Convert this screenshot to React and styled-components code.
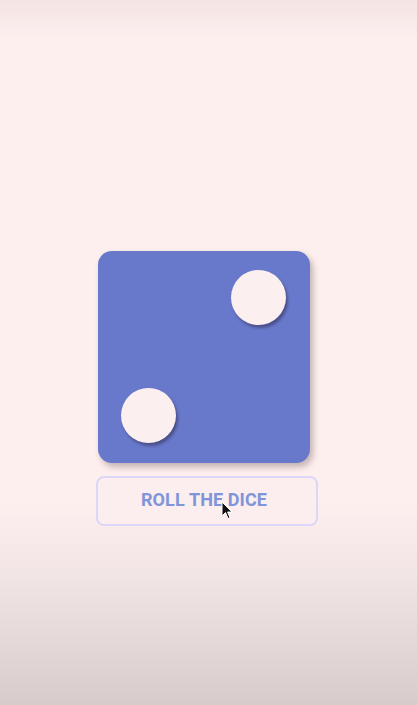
import styled, { createGlobalStyle } from 'styled-components';

const Global = createGlobalStyle`
  html, body { margin: 0; padding: 0; }
  body { font-family: Roboto, "Liberation Sans", sans-serif; }
`

const Page = styled.div`
  width: 417px;
  height: 705px;
  overflow: hidden;
  background: linear-gradient(to bottom, #f4e4e4 0px, #fcefee 40px, #fdefee 500px, #f1e4e4 580px, #d7cccc 705px);
  display: flex;
  flex-direction: column;
  align-items: center;
  padding-top: 251px;
  box-sizing: border-box;
  position: relative;
`

const Dice = styled.div`
  width: 212px;
  height: 212px;
  margin-left: -9px;
  border-radius: 14px;
  background: #6879cb;
  box-shadow: 3px 4px 6px rgba(90, 70, 70, 0.35);
  display: grid;
  grid-template-columns: 1fr 1fr;
  grid-template-rows: 1fr 1fr;
  padding: 19px 24px 20px 23px;
  box-sizing: border-box;
`

const Pip = styled.div`
  width: 55px;
  height: 55px;
  border-radius: 50%;
  background: #fcefef;
  box-shadow: 2px 3px 3px rgba(40, 30, 60, 0.45);
  justify-self: ${p => p.$x};
  align-self: ${p => p.$y};
  grid-column: ${p => p.$col};
  grid-row: ${p => p.$row};
`

const RollButton = styled.button`
  margin-top: 13px;
  margin-left: -3px;
  width: 222px;
  height: 50px;
  padding: 0 6px 4px 0;
  border: 2px solid #dcd7f6;
  border-radius: 8px;
  background: #fcedee;
  color: #7f95da;
  font-family: Roboto, "Liberation Sans", sans-serif;
  font-weight: 700;
  font-size: 18px;
  letter-spacing: 0.1px;
  cursor: pointer;
  position: relative;
`

const Cursor = styled.svg`
  position: absolute;
  left: 123px;
  top: 23px;
  width: 12px;
  height: 19px;
`

const App = () => {
  return (
    <Page>
      <Global />
      <Dice>
        <Pip $col={2} $row={1} $x="end" $y="start" />
        <Pip $col={1} $row={2} $x="start" $y="end" />
      </Dice>
      <RollButton>
        ROLL THE DICE
        <Cursor viewBox="0 0 12 19">
          <path d="M1 1 L1 15 L4.5 11.5 L7 17.5 L9 16.7 L6.6 11 L11 11 Z" fill="#111" stroke="#fff" strokeWidth="1" />
        </Cursor>
      </RollButton>
    </Page>
  )
}

export default App
